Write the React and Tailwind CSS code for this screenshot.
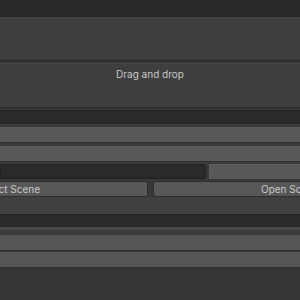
export default function App() {
  return (
    <div className="w-[300px] h-[300px] overflow-hidden bg-[#383838] flex flex-col text-[#c8c8c8] text-[10px]" style={{ fontFamily: "Inter, 'Noto Sans', sans-serif" }}>
      <div className="h-[17px] bg-[#282828] shrink-0" />
      <div className="h-[44px] shrink-0 bg-[#3e3e3e] border-t border-[#474747] border-b border-b-[#2a2a2a]" />
      <div className="h-[2px] shrink-0 bg-[#353535]" />
      <div className="h-[45px] shrink-0 bg-[#3e3e3e] border-t border-[#474747] border-b border-b-[#2a2a2a] flex justify-center pt-[3px]">
        <span className="leading-[14px]">Drag and drop</span>
      </div>
      <div className="h-[2px] shrink-0 bg-[#383838]" />
      <div className="h-[14px] shrink-0 bg-[#2a2a2a] border-t border-[#222]" />
      <div className="h-[3px] shrink-0 bg-[#3a3a3a]" />
      <div className="h-[16px] shrink-0 bg-[#585858] border-t border-[#5e5e5e] border-b border-b-[#2e2e2e]" />
      <div className="h-[3px] shrink-0 bg-[#3a3a3a]" />
      <div className="h-[16px] shrink-0 bg-[#585858] border-t border-[#5e5e5e] border-b border-b-[#2e2e2e]" />
      <div className="h-[2px] shrink-0 bg-[#3a3a3a]" />
      <div className="h-[15px] shrink-0 flex gap-[3px]">
        <div className="w-[206px] bg-[#2a2a2a] border border-[#212121] rounded-r-[3px]" />
        <div className="flex-1 bg-[#585858] border-t border-[#5e5e5e] border-l border-[#2e2e2e]" />
      </div>
      <div className="h-[2px] shrink-0" />
      <div className="h-[16px] shrink-0 flex gap-[5px] ml-[-130px] w-[560px]">
        <div className="w-[278px] bg-[#585858] border border-[#2e2e2e] rounded-[3px] flex items-center justify-center">
          <span>Select Scene</span>
        </div>
        <div className="w-[274px] bg-[#585858] border border-[#2e2e2e] rounded-[3px] flex items-center justify-center">
          <span>Open Scene</span>
        </div>
      </div>
      <div className="h-[17px] shrink-0 bg-[#404040]" />
      <div className="h-[13px] shrink-0 bg-[#2a2a2a] border-t border-[#222]" />
      <div className="h-[3px] shrink-0 bg-[#474747]" />
      <div className="h-[5px] shrink-0 bg-[#3a3a3a]" />
      <div className="h-[16px] shrink-0 bg-[#555555] border-b border-[#2e2e2e]" />
      <div className="h-[1px] shrink-0 bg-[#3a3a3a]" />
      <div className="h-[16px] shrink-0 bg-[#555555] border-b border-[#2e2e2e]" />
      <div className="flex-1 bg-[#363636]" />
    </div>
  );
}
